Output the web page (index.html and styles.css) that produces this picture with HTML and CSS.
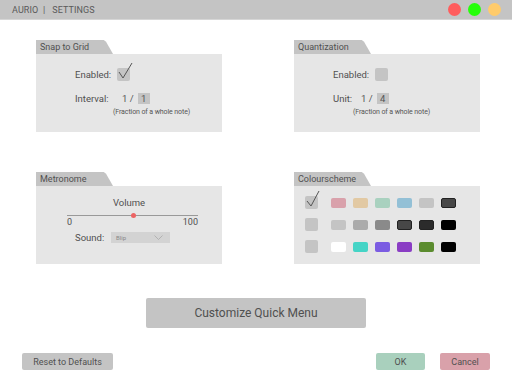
FILE: index.html
```html
<!DOCTYPE html>
<html lang="en">
<head>
    <meta charset="UTF-8" />
    <meta name="viewport" content="width=device-width, initial-scale=1.0" />
    <title>Aurio | Settings</title>
    <link rel="stylesheet" href="styles.css">
</head>
<body>
    <div class="titlebar">
        <span class="title">AURIO&nbsp;&nbsp;|&nbsp;&nbsp;&nbsp;SETTINGS</span>
        <div class="lights">
            <span class="light red"></span>
            <span class="light green"></span>
            <span class="light yellow"></span>
        </div>
    </div>

    <div class="panels">
        <div class="panel">
            <div class="tab">Snap to Grid</div>
            <div class="panel-body snap">
                <div class="row row-enabled">
                    <span class="label">Enabled:</span>
                    <span class="check">
                        <svg class="tick" width="16" height="18" viewBox="0 0 16 18"><path d="M1 9 L5 15 L14 0" fill="none" stroke="#555" stroke-width="1"/></svg>
                    </span>
                </div>
                <div class="row row-value">
                    <span class="label label-interval">Interval:</span>
                    <span class="frac">1 /</span>
                    <span class="num">1</span>
                </div>
                <div class="note">(Fraction of a whole note)</div>
            </div>
        </div>

        <div class="panel">
            <div class="tab">Quantization</div>
            <div class="panel-body quant">
                <div class="row row-enabled">
                    <span class="label">Enabled:</span>
                    <span class="check"></span>
                </div>
                <div class="row row-value">
                    <span class="label label-unit">Unit:</span>
                    <span class="frac">1 /</span>
                    <span class="num">4</span>
                </div>
                <div class="note">(Fraction of a whole note)</div>
            </div>
        </div>

        <div class="panel">
            <div class="tab">Metronome</div>
            <div class="panel-body metro">
                <div class="volume">Volume</div>
                <div class="slider">
                    <div class="track"><span class="thumb"></span></div>
                    <div class="scale"><span>0</span><span>100</span></div>
                </div>
                <div class="row sound-row">
                    <span class="label">Sound:</span>
                    <div class="select">
                        <span>Blip</span>
                        <svg width="9" height="5" viewBox="0 0 9 5"><path d="M0.5 0.5 L4.5 4.5 L8.5 0.5" fill="none" stroke="#aaa" stroke-width="0.8"/></svg>
                    </div>
                </div>
            </div>
        </div>

        <div class="panel">
            <div class="tab">Colourscheme</div>
            <div class="panel-body colours">
                <div class="swatch-row">
                    <span class="check">
                        <svg class="tick" width="16" height="18" viewBox="0 0 16 18"><path d="M1 10 L5 15 L13 0" fill="none" stroke="#555" stroke-width="1"/></svg>
                    </span>
                    <span class="swatch" style="background:#d9a1ab"></span>
                    <span class="swatch" style="background:#e2c9a3"></span>
                    <span class="swatch" style="background:#a9d1bf"></span>
                    <span class="swatch" style="background:#93c0d6"></span>
                    <span class="swatch" style="background:#c4c4c4"></span>
                    <span class="swatch dark" style="background:#474747"></span>
                </div>
                <div class="swatch-row">
                    <span class="check"></span>
                    <span class="swatch" style="background:#c4c4c4"></span>
                    <span class="swatch" style="background:#ababab"></span>
                    <span class="swatch" style="background:#8a8a8a"></span>
                    <span class="swatch dark" style="background:#474747"></span>
                    <span class="swatch dark" style="background:#2b2b2b"></span>
                    <span class="swatch" style="background:#000"></span>
                </div>
                <div class="swatch-row">
                    <span class="check"></span>
                    <span class="swatch" style="background:#fff"></span>
                    <span class="swatch" style="background:#45d4c6"></span>
                    <span class="swatch" style="background:#7b5ce2"></span>
                    <span class="swatch" style="background:#8a3dc4"></span>
                    <span class="swatch" style="background:#5b8c2f"></span>
                    <span class="swatch" style="background:#000"></span>
                </div>
            </div>
        </div>
    </div>

    <div class="quick">
        <button class="btn btn-quick">Customize Quick Menu</button>
    </div>

    <div class="footer">
        <button class="btn btn-reset">Reset to Defaults</button>
        <div class="actions">
            <button class="btn btn-ok">OK</button>
            <button class="btn btn-cancel">Cancel</button>
        </div>
    </div>
</body>
</html>
```

FILE: styles.css
```css
body {
    margin: 0;
    font-family: Roboto, "Noto Sans", sans-serif;
    background-color: #fff;
    color: #555;
}

.titlebar {
    height: 20px;
    background-color: #c4c4c4;
    border-bottom: 1px solid #d6d6d6;
    box-sizing: border-box;
    display: flex;
    align-items: center;
    justify-content: space-between;
    padding: 0 11px 0 12px;
}

.title {
    font-size: 9px;
    color: #5a5a5a;
    letter-spacing: 0.1px;
}

.lights {
    display: flex;
    gap: 7px;
}

.light {
    width: 13px;
    height: 13px;
    border-radius: 50%;
}

.light.red { background-color: #ff5d5d; }
.light.green { background-color: #26ff0a; }
.light.yellow { background-color: #ffcb6b; }

.panels {
    display: grid;
    grid-template-columns: 186px 186px;
    column-gap: 72px;
    row-gap: 40px;
    padding: 20px 0 0 36px;
}

.tab {
    width: 77px;
    height: 14px;
    background-color: #c4c4c4;
    clip-path: polygon(0 0, 88% 0, 91% 12%, 100% 100%, 0 100%);
    font-size: 9px;
    line-height: 15px;
    padding-left: 4px;
    box-sizing: border-box;
    color: #505050;
}

.panel-body {
    height: 78px;
    background-color: #e6e6e6;
    box-sizing: border-box;
    font-size: 9.5px;
}

.row {
    display: flex;
    align-items: center;
}

.label {
    color: #505050;
}

.check {
    position: relative;
    width: 13px;
    height: 13px;
    border-radius: 2px;
    background-color: #c4c4c4;
    flex: none;
}

.tick {
    position: absolute;
    left: 1px;
    top: -5px;
}

.snap, .quant {
    padding: 14px 0 0 39px;
}

.row-enabled .label {
    width: 42px;
}

.row-value {
    margin-top: 12px;
}

.num {
    width: 12px;
    height: 11px;
    line-height: 11px;
    text-align: center;
    background-color: #c4c4c4;
    margin-left: 4px;
}

.snap .label-interval { width: 47px; }
.quant .label-unit { width: 28px; }

.note {
    font-size: 7px;
    color: #555;
    margin-top: 4px;
    letter-spacing: -0.1px;
}

.snap .note { padding-left: 38px; }
.quant .note { padding-left: 20px; }

.metro {
    padding-top: 11px;
}

.volume {
    text-align: center;
    font-size: 9.5px;
    color: #505050;
}

.slider {
    width: 131px;
    margin: 7px 0 0 31px;
}

.track {
    position: relative;
    height: 1px;
    background-color: #999;
}

.thumb {
    position: absolute;
    left: 64px;
    top: -2px;
    width: 5px;
    height: 5px;
    border-radius: 50%;
    background-color: #ec6363;
}

.scale {
    display: flex;
    justify-content: space-between;
    font-size: 9px;
    line-height: 10px;
    color: #505050;
    margin-top: 1px;
}

.sound-row {
    padding-left: 39px;
    margin-top: 5px;
}

.sound-row .label {
    width: 36px;
}

.select {
    width: 59px;
    height: 11px;
    background-color: #d3d3d3;
    display: flex;
    align-items: center;
    justify-content: space-between;
    padding: 0 7px 0 5px;
    box-sizing: border-box;
    font-size: 6px;
    color: #888;
}

.colours {
    padding: 10px 0 0 11px;
}

.swatch-row {
    display: flex;
    align-items: center;
    height: 13px;
    margin-bottom: 9px;
}

.swatch-row .check {
    margin-right: 13px;
}

.swatch {
    width: 15px;
    height: 10px;
    border-radius: 2px;
    margin-right: 7px;
    box-sizing: border-box;
}

.swatch.dark {
    border: 1px solid #222;
}

.btn {
    border: none;
    border-radius: 2px;
    font-family: Roboto, "Noto Sans", sans-serif;
    color: #505050;
    padding: 0;
    cursor: pointer;
}

.quick {
    display: flex;
    justify-content: center;
    padding: 34px 0 0 0;
}

.btn-quick {
    width: 220px;
    height: 30px;
    background-color: #c4c4c4;
    font-size: 12px;
}

.footer {
    display: flex;
    justify-content: space-between;
    padding: 25px 22px 0 22px;
}

.actions {
    display: flex;
    gap: 15px;
}

.btn-reset {
    width: 91px;
    height: 17px;
    background-color: #c4c4c4;
    font-size: 9px;
}

.btn-ok {
    width: 49px;
    height: 17px;
    background-color: #a9d0bd;
    font-size: 9px;
}

.btn-cancel {
    width: 50px;
    height: 17px;
    background-color: #d9a1aa;
    font-size: 9px;
}
```
